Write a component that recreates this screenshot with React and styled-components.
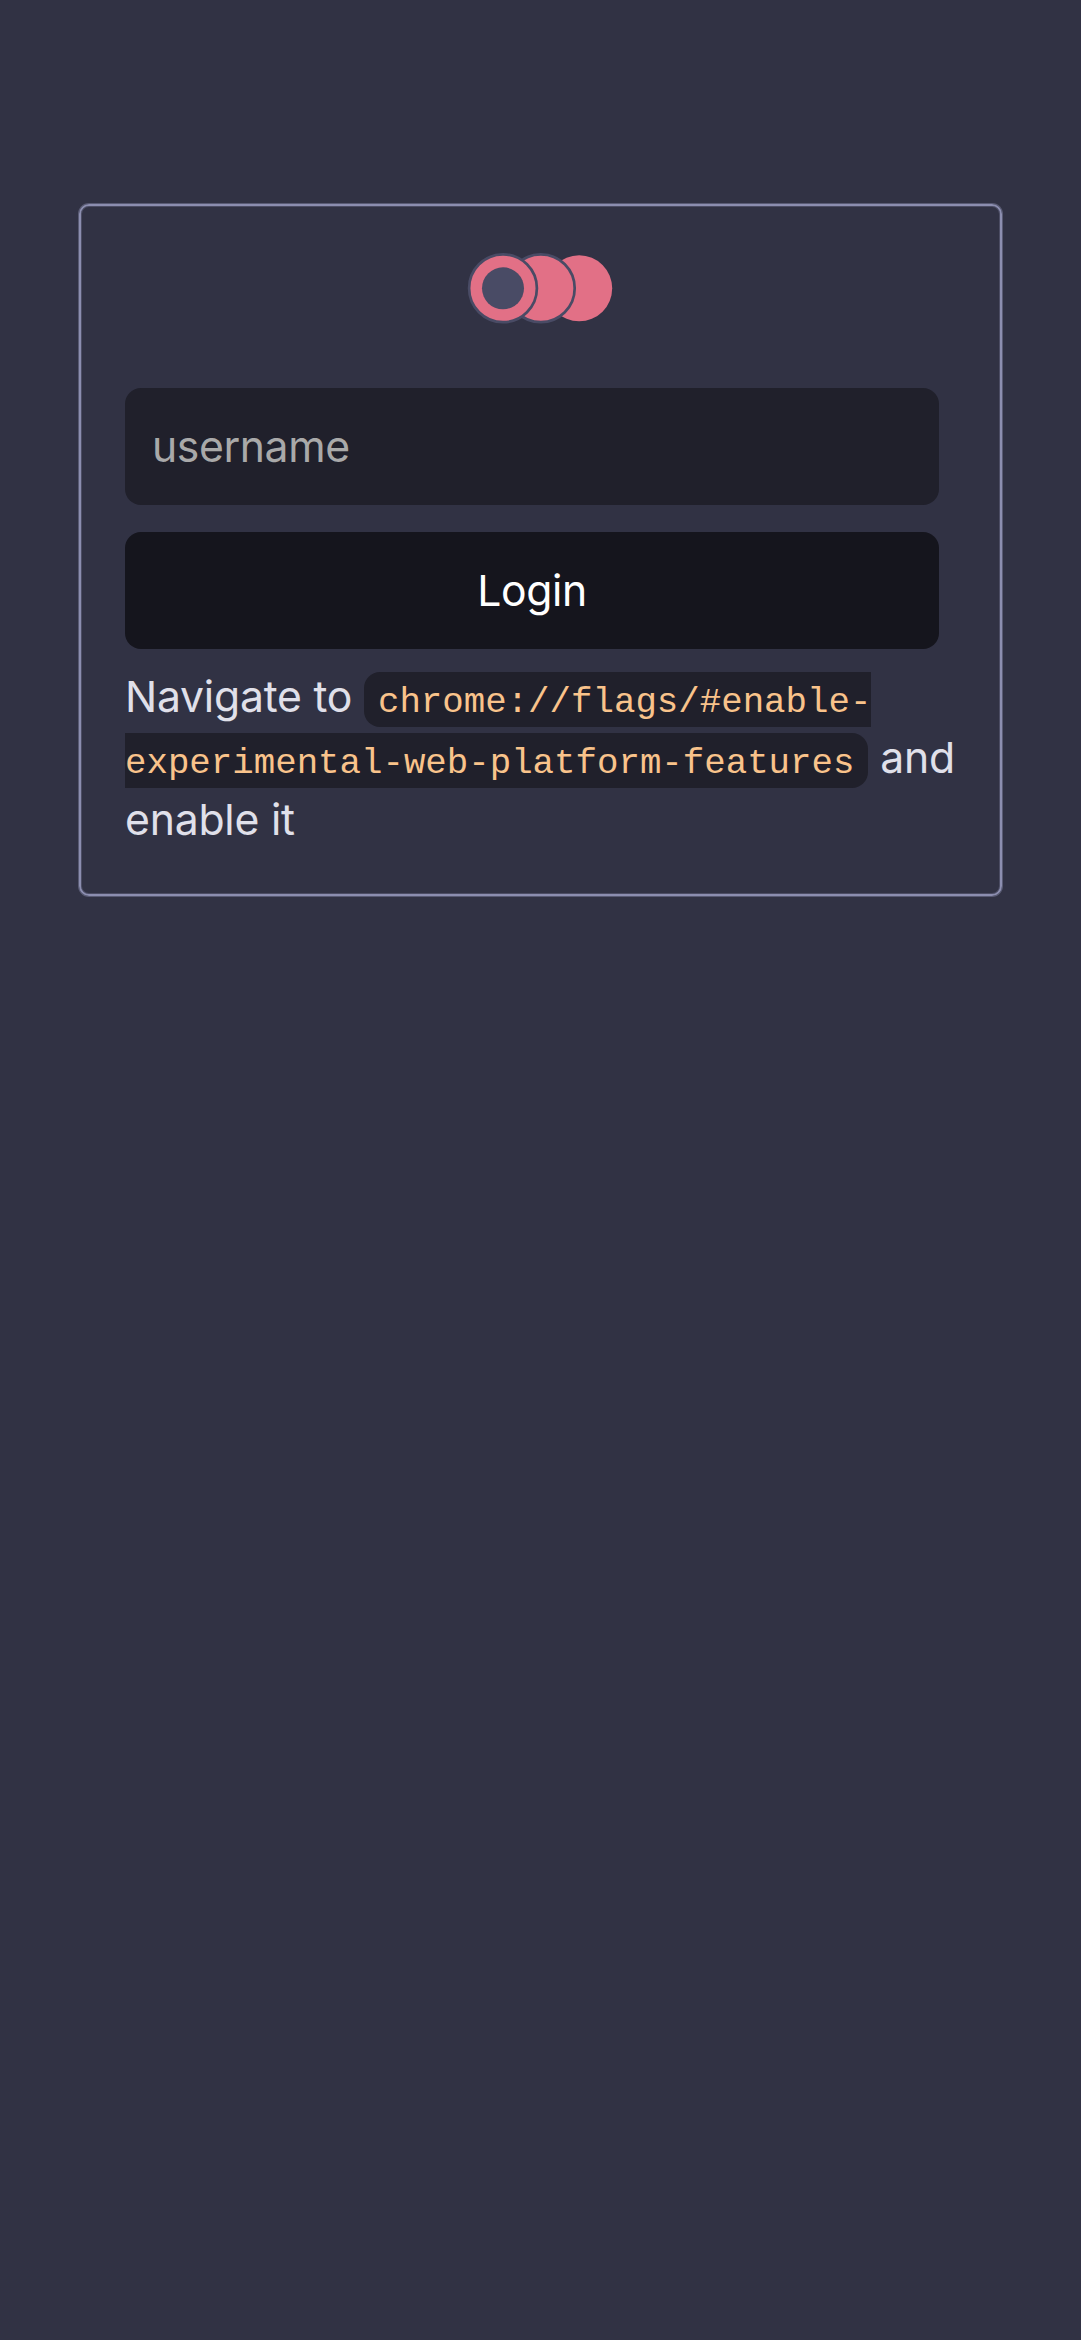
import React from "react";
import styled, { createGlobalStyle } from "styled-components";

const GlobalStyle = createGlobalStyle`
  * { box-sizing: border-box; }
  body {
    margin: 0;
    background: #313244;
    color: #e0e0ea;
    font-family: Inter, "Liberation Sans", sans-serif;
    font-size: 42.7px;
    letter-spacing: -0.4px;
  }
`;

const Page = styled.main`
  min-height: 2340px;
  padding: 204px 79px 0;
`;

const Card = styled.section`
  height: 692px;
  padding: 45px 44px 0;
  border: 2px solid #8c8eb0;
  border-radius: 10px;
  box-shadow: 0 0 0 1px rgba(140, 142, 176, 0.45), inset 0 0 0 1px rgba(140, 142, 176, 0.3);
`;

const Logo = styled.svg`
  display: block;
  width: 150px;
  height: 76px;
  margin: 0 auto 61px;
`;

const Form = styled.form`
  display: flex;
  flex-direction: column;
  gap: 27px;
  width: 814px;
`;

const Field = styled.input`
  height: 117px;
  padding: 0 27px 1px;
  border: 0;
  border-radius: 16px;
  outline: 0;
  background: #20202b;
  color: #fff;
  font: inherit;
  letter-spacing: inherit;
  &::placeholder { color: #a9a9a9; opacity: 1; }
`;

const Button = styled.button`
  height: 117px;
  padding: 0 0 1px;
  border: 0;
  border-radius: 16px;
  background: #15151d;
  color: #fff;
  font: inherit;
  letter-spacing: inherit;
`;

const Hint = styled.p`
  margin: 17px 0 0;
  line-height: 61.3px;
  letter-spacing: -0.22px;
`;

const Code = styled.code`
  padding: 10px 14px 4px;
  border-radius: 16px;
  background: #20202b;
  color: #f9c38b;
  font-family: "Liberation Mono", monospace;
  font-size: 35.76px;
  line-height: 1;
  letter-spacing: 0;
`;

export default function App() {
  return (
    <>
      <GlobalStyle />
      <Page>
        <Card>
          <Logo viewBox="0 0 150 76" aria-hidden="true">
            <circle cx="113.2" cy="37.3" r="33" fill="#e27086" />
            <circle cx="74.8" cy="37.3" r="33.9" fill="#e27086" stroke="#494b65" strokeWidth="2.7" />
            <circle cx="37" cy="37.3" r="33.9" fill="#e27086" stroke="#494b65" strokeWidth="2.7" />
            <circle cx="37" cy="37.3" r="21" fill="#494b65" />
          </Logo>
          <Form onSubmit={(event) => event.preventDefault()}>
            <Field placeholder="username" aria-label="username" />
            <Button type="submit">Login</Button>
          </Form>
          <Hint>
            Navigate to <Code>chrome://flags/#enable-experimental-web-platform-features</Code> and enable it
          </Hint>
        </Card>
      </Page>
    </>
  );
}
